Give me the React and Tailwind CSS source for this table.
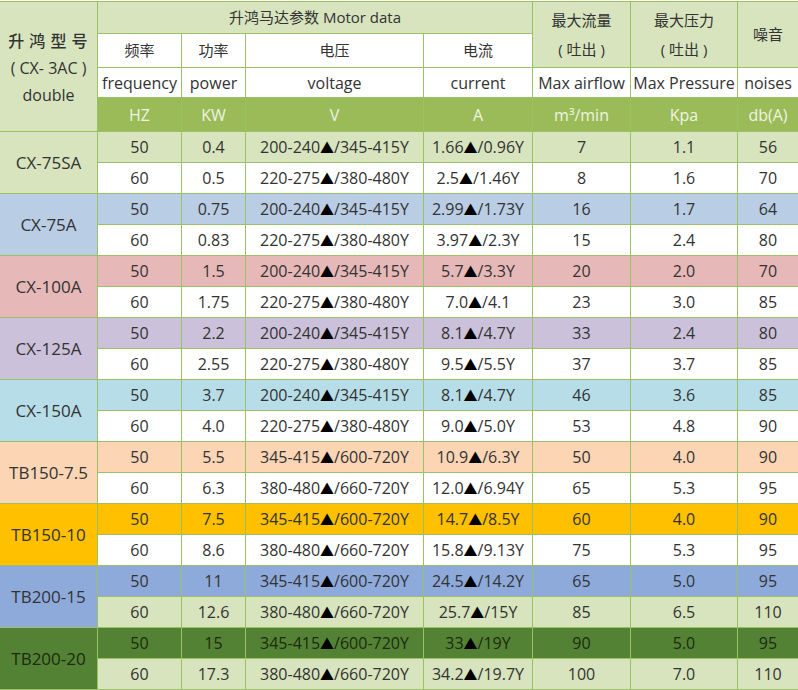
const MODELS = [
  {
    name: 'CX-75SA',
    bg: 'bg-[#d7e4bd]',
    alt: 'bg-white',
    rows: [
      ['50', '0.4', '200-240▲/345-415Y', '1.66▲/0.96Y', '7', '1.1', '56'],
      ['60', '0.5', '220-275▲/380-480Y', '2.5▲/1.46Y', '8', '1.6', '70'],
    ],
  },
  {
    name: 'CX-75A',
    bg: 'bg-[#b9cde5]',
    alt: 'bg-white',
    rows: [
      ['50', '0.75', '200-240▲/345-415Y', '2.99▲/1.73Y', '16', '1.7', '64'],
      ['60', '0.83', '220-275▲/380-480Y', '3.97▲/2.3Y', '15', '2.4', '80'],
    ],
  },
  {
    name: 'CX-100A',
    bg: 'bg-[#e6b9b8]',
    alt: 'bg-white',
    rows: [
      ['50', '1.5', '200-240▲/345-415Y', '5.7▲/3.3Y', '20', '2.0', '70'],
      ['60', '1.75', '220-275▲/380-480Y', '7.0▲/4.1', '23', '3.0', '85'],
    ],
  },
  {
    name: 'CX-125A',
    bg: 'bg-[#ccc1da]',
    alt: 'bg-white',
    rows: [
      ['50', '2.2', '200-240▲/345-415Y', '8.1▲/4.7Y', '33', '2.4', '80'],
      ['60', '2.55', '220-275▲/380-480Y', '9.5▲/5.5Y', '37', '3.7', '85'],
    ],
  },
  {
    name: 'CX-150A',
    bg: 'bg-[#b7dee8]',
    alt: 'bg-white',
    rows: [
      ['50', '3.7', '200-240▲/345-415Y', '8.1▲/4.7Y', '46', '3.6', '85'],
      ['60', '4.0', '220-275▲/380-480Y', '9.0▲/5.0Y', '53', '4.8', '90'],
    ],
  },
  {
    name: 'TB150-7.5',
    bg: 'bg-[#fcd5b5]',
    alt: 'bg-white',
    rows: [
      ['50', '5.5', '345-415▲/600-720Y', '10.9▲/6.3Y', '50', '4.0', '90'],
      ['60', '6.3', '380-480▲/660-720Y', '12.0▲/6.94Y', '65', '5.3', '95'],
    ],
  },
  {
    name: 'TB150-10',
    bg: 'bg-[#ffc000]',
    alt: 'bg-white',
    rows: [
      ['50', '7.5', '345-415▲/600-720Y', '14.7▲/8.5Y', '60', '4.0', '90'],
      ['60', '8.6', '380-480▲/660-720Y', '15.8▲/9.13Y', '75', '5.3', '95'],
    ],
  },
  {
    name: 'TB200-15',
    bg: 'bg-[#8eaadb]',
    alt: 'bg-[#d7e4bd]',
    rows: [
      ['50', '11', '345-415▲/600-720Y', '24.5▲/14.2Y', '65', '5.0', '95'],
      ['60', '12.6', '380-480▲/660-720Y', '25.7▲/15Y', '85', '6.5', '110'],
    ],
  },
  {
    name: 'TB200-20',
    bg: 'bg-[#548235]',
    alt: 'bg-[#d7e4bd]',
    dark: true,
    rows: [
      ['50', '15', '345-415▲/600-720Y', '33▲/19Y', '90', '5.0', '95'],
      ['60', '17.3', '380-480▲/660-720Y', '34.2▲/19.7Y', '100', '7.0', '110'],
    ],
  },
]

const cell = 'border border-[#9ac163] text-center align-middle p-0 whitespace-nowrap'

// the ▲ in the source is smaller than the fallback glyph, so shrink it
function Value({ v }) {
  if (!v.includes('▲')) return v
  const [a, b] = v.split('▲')
  return (
    <>
      {a}
      <span className="text-[14px] text-black" style={{ fontFamily: '"Noto Sans CJK SC", sans-serif' }}>
        ▲
      </span>
      {b}
    </>
  )
}

export default function App() {
  return (
    <div
      className="w-[798px] h-[690px] bg-white overflow-hidden pt-px text-[#333] text-[16px] leading-tight"
      style={{ fontFamily: '"Open Sans", "Noto Sans CJK SC", sans-serif' }}
    >
      <table className="table-fixed border-collapse w-[799px] -ml-px">
        <colgroup>
          <col className="w-[98px]" />
          <col className="w-[84px]" />
          <col className="w-[64px]" />
          <col className="w-[178px]" />
          <col className="w-[109px]" />
          <col className="w-[98px]" />
          <col className="w-[107px]" />
          <col className="w-[61px]" />
        </colgroup>
        <thead>
          <tr className="h-[32px] bg-[#d7e4bd]">
            <th rowSpan={4} className={`${cell} font-normal leading-[27px] pt-[4px]`}>
              <div className="tracking-[0.32em] pl-[4px] font-medium">升鸿型号</div>
              <div>( CX- 3AC )</div>
              <div>double</div>
            </th>
            <th colSpan={4} className={`${cell} font-normal text-[15px]`}>
              升鸿马达参数 Motor data
            </th>
            <th rowSpan={2} className={`${cell} font-normal text-[15px] leading-[1.9]`}>
              <div>最大流量</div>
              <div>( 吐出 )</div>
            </th>
            <th rowSpan={2} className={`${cell} font-normal text-[15px] leading-[1.9]`}>
              <div>最大压力</div>
              <div>( 吐出 )</div>
            </th>
            <th rowSpan={2} className={`${cell} font-normal text-[15px]`}>
              噪音
            </th>
          </tr>
          <tr className="h-[34px] bg-white">
            <th className={`${cell} font-normal text-[15px]`}>频率</th>
            <th className={`${cell} font-normal text-[15px]`}>功率</th>
            <th className={`${cell} font-normal text-[15px]`}>电压</th>
            <th className={`${cell} font-normal text-[15px]`}>电流</th>
          </tr>
          <tr className="h-[30px] bg-white">
            <th className={`${cell} font-normal`}>frequency</th>
            <th className={`${cell} font-normal`}>power</th>
            <th className={`${cell} font-normal`}>voltage</th>
            <th className={`${cell} font-normal`}>current</th>
            <th className={`${cell} font-normal`}>Max airflow</th>
            <th className={`${cell} font-normal`}>Max Pressure</th>
            <th className={`${cell} font-normal`}>noises</th>
          </tr>
          <tr className="h-[34px] bg-[#9bbb59] text-[#eef4e2]">
            {['HZ', 'KW', 'V', 'A', 'm³/min', 'Kpa', 'db(A)'].map((u) => (
              <th key={u} className={`${cell} font-normal`}>
                {u}
              </th>
            ))}
          </tr>
        </thead>
        <tbody>
          {MODELS.map((m) =>
            m.rows.map((r, i) => (
              <tr key={m.name + i} className={`h-[31px] ${i === 0 ? m.bg : m.alt}`}>
                {i === 0 && (
                  <td
                    rowSpan={2}
                    className={`${cell} ${m.bg} text-[17px] ${m.dark ? 'text-[#1c2a10]' : ''}`}
                  >
                    {m.name}
                  </td>
                )}
                {r.map((v, j) => (
                  <td key={j} className={`${cell} ${i === 0 && m.dark ? 'text-[#1c2a10]' : ''}`}>
                    <Value v={v} />
                  </td>
                ))}
              </tr>
            ))
          )}
        </tbody>
      </table>
    </div>
  )
}
